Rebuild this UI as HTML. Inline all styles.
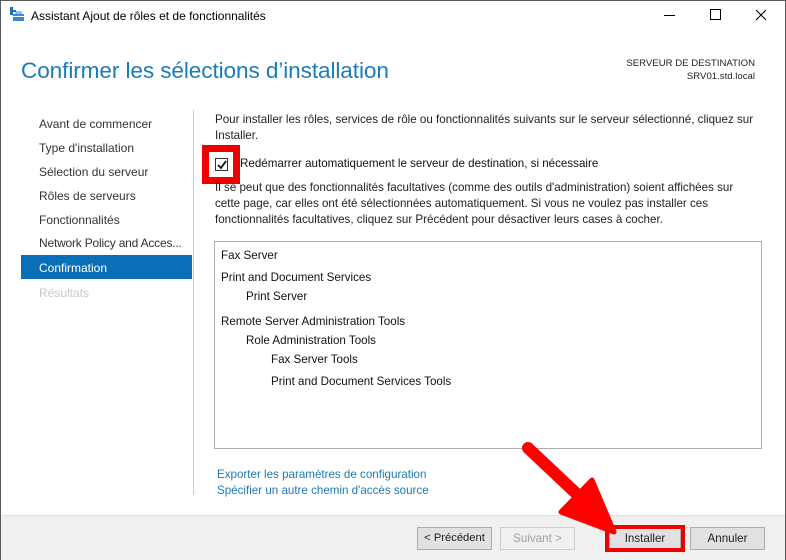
<!DOCTYPE html>
<html><head><meta charset="utf-8"><style>
*{margin:0;padding:0;box-sizing:border-box}
body{width:786px;height:560px;overflow:hidden;background:#fff;font-family:"Liberation Sans",sans-serif;font-size:11.6px;color:#1e1e1e;position:relative}
.win{position:absolute;left:0;top:0;width:786px;height:560px;border:1px solid #5a5a5a;border-bottom:none}
.a{position:absolute;white-space:nowrap}
.nav{position:absolute;left:39px;font-size:12px;color:#333}
.tree{position:absolute;font-size:11.6px;color:#111}
.btn{position:absolute;top:527px;height:23px;border:1px solid #adadad;background:#e1e1e1;font-size:11.6px;text-align:center;line-height:21px}
</style></head><body>
<div class="win"></div>
<svg class="a" style="left:9px;top:7px" width="16" height="16"><rect x="1" y="0" width="3" height="8" fill="#1e6fb5"/><rect x="1" y="3" width="6" height="2" fill="#1e6fb5"/><rect x="4" y="7" width="11" height="7" fill="#3a8ad0"/><rect x="7" y="5" width="5" height="2" fill="none" stroke="#3a8ad0"/><rect x="4" y="9" width="11" height="1" fill="#fff"/></svg>
<div class="a" style="left:31px;top:9px;font-size:12px;color:#000">Assistant Ajout de rôles et de fonctionnalités</div>
<div class="a" style="left:664px;top:15px;width:11px;height:1px;background:#000"></div>
<div class="a" style="left:710px;top:9px;width:11px;height:11px;border:1px solid #000"></div>
<svg class="a" style="left:755px;top:9px" width="12" height="12"><path d="M1 1L11 11M11 1L1 11" stroke="#000" stroke-width="1.1"/></svg>
<div class="a" style="left:21px;top:58px;font-size:22.6px;color:#1a7cb8;letter-spacing:-0.1px">Confirmer les sélections d’installation</div>
<div class="a" style="right:31px;top:57px;font-size:9.6px;text-align:right;line-height:13px;color:#222">SERVEUR DE DESTINATION<br>SRV01.std.local</div>
<div class="a" style="left:193px;top:110px;width:1px;height:385px;background:#ccc"></div>
<div class="nav" style="top:117px">Avant de commencer</div>
<div class="nav" style="top:141px">Type d'installation</div>
<div class="nav" style="top:165px">Sélection du serveur</div>
<div class="nav" style="top:189px">Rôles de serveurs</div>
<div class="nav" style="top:213px">Fonctionnalités</div>
<div class="nav" style="top:236px;letter-spacing:-0.2px">Network Policy and Acces...</div>
<div class="a" style="left:21px;top:255px;width:171px;height:24px;background:#0b6fb8"></div>
<div class="nav" style="top:261px;color:#fff">Confirmation</div>
<div class="nav" style="top:286px;color:#c8c8c8">Résultats</div>
<div class="a" style="left:215px;top:112px;line-height:16px;color:#222">Pour installer les rôles, services de rôle ou fonctionnalités suivants sur le serveur sélectionné, cliquez sur<br>Installer.</div>
<div class="a" style="left:215px;top:158px;width:13px;height:13px;border:1px solid #333;background:#fff"></div>
<svg class="a" style="left:217px;top:160px" width="10" height="10"><path d="M1 5L4 8L9 1" stroke="#111" stroke-width="1.8" fill="none"/></svg>
<div class="a" style="left:202px;top:145px;width:38px;height:39px;border:7px solid #e00"></div>
<div class="a" style="left:240px;top:157px;color:#111">Redémarrer automatiquement le serveur de destination, si nécessaire</div>
<div class="a" style="left:215px;top:180px;line-height:16px;color:#222">Il se peut que des fonctionnalités facultatives (comme des outils d'administration) soient affichées sur<br>cette page, car elles ont été sélectionnées automatiquement. Si vous ne voulez pas installer ces<br>fonctionnalités facultatives, cliquez sur Précédent pour désactiver leurs cases à cocher.</div>
<div class="a" style="left:214px;top:241px;width:548px;height:208px;border:1px solid #adadad"></div>
<div class="tree" style="left:221px;top:249px">Fax Server</div>
<div class="tree" style="left:221px;top:271px">Print and Document Services</div>
<div class="tree" style="left:246px;top:290px">Print Server</div>
<div class="tree" style="left:221px;top:315px">Remote Server Administration Tools</div>
<div class="tree" style="left:246px;top:334px">Role Administration Tools</div>
<div class="tree" style="left:271px;top:353px">Fax Server Tools</div>
<div class="tree" style="left:271px;top:375px">Print and Document Services Tools</div>
<div class="a" style="left:217px;top:467px;color:#1a7cb8;line-height:16px">Exporter les paramètres de configuration<br>Spécifier un autre chemin d'accès source</div>
<div class="a" style="left:1px;top:515px;width:784px;height:45px;background:#f0f0f0;border-top:1px solid #dfdfdf"></div>
<div class="btn" style="left:417px;width:75px;font-size:11.2px">&lt; Précédent</div>
<div class="btn" style="left:500px;width:75px;color:#a0a0a0;background:#f0f0f0;border-color:#ccc">Suivant &gt;</div>
<div class="btn" style="left:609px;width:72px">Installer</div>
<div class="a" style="left:605px;top:525px;width:80px;height:27px;border:4px solid #e00"></div>
<div class="btn" style="left:690px;width:75px">Annuler</div>
<svg class="a" style="left:0;top:0" width="786" height="560"><line x1="528" y1="448" x2="580" y2="497" stroke="#f00" stroke-width="12" stroke-linecap="round"/><polygon points="592,480 561,512 614,532" fill="#f00" stroke="#f00" stroke-width="5" stroke-linejoin="round"/></svg>
</body></html>
